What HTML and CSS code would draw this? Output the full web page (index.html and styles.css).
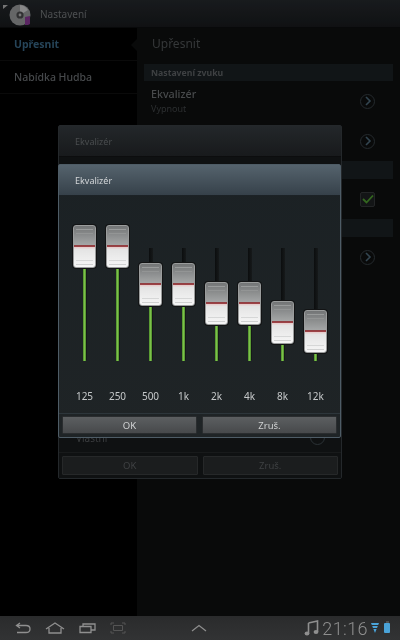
FILE: index.html
```html
<!DOCTYPE html>
<html lang="cs">
<head>
    <meta charset="UTF-8">
    <meta name="viewport" content="width=device-width, initial-scale=1.0">
    <title>Nastavení</title>
    <link rel="stylesheet" href="styles.css">
</head>
<body>
    <div class="screen">
        <!-- Action bar -->
        <header class="action-bar">
            <svg class="app-logo" width="36" height="26" viewBox="0 0 36 26">
                <path d="M3 4 L8 4 L3 8 Z" fill="#8a8a8a"/>
                <circle cx="20" cy="14" r="10.5" fill="#77787a"/>
                <path d="M20 4 A10 10 0 0 1 28 9 L20 14 Z" fill="#a0a0a2"/>
                <circle cx="20" cy="14" r="3.6" fill="#3a3a3c"/>
                <circle cx="20" cy="14" r="1.4" fill="#8d8d8f"/>
                <path d="M25 16 L30 15 L30 23 L28 24 L25 24 Z" fill="#6a2c74"/>
            </svg>
            <span class="action-title">Nastavení</span>
        </header>

        <div class="content">
            <nav class="sidebar">
                <div class="side-item active">Upřesnit</div>
                <div class="side-item">Nabídka Hudba</div>
            </nav>

            <main class="panel">
                <h2 class="panel-title">Upřesnit</h2>
                <div class="section-head">Nastavení zvuku</div>
                <div class="pref-row">
                    <div>
                        <div class="pref-name">Ekvalizér</div>
                        <div class="pref-sub">Vypnout</div>
                    </div>
                    <span class="chevron"><svg width="8" height="10" viewBox="0 0 8 10"><path d="M2 1 L6 5 L2 9" fill="none" stroke="#3d5360" stroke-width="1.6"/></svg></span>
                </div>
                <div class="pref-row end">
                    <span class="chevron"><svg width="8" height="10" viewBox="0 0 8 10"><path d="M2 1 L6 5 L2 9" fill="none" stroke="#3d5360" stroke-width="1.6"/></svg></span>
                </div>
                <div class="section-head tall"></div>
                <div class="pref-row end">
                    <span class="checkbox"><svg width="12" height="10" viewBox="0 0 12 10"><path d="M1 5 L4.5 8.5 L11 1.5" fill="none" stroke="#3d7a25" stroke-width="1.8"/></svg></span>
                </div>
                <div class="section-head tall"></div>
                <div class="pref-row end">
                    <span class="chevron"><svg width="8" height="10" viewBox="0 0 8 10"><path d="M2 1 L6 5 L2 9" fill="none" stroke="#3d5360" stroke-width="1.6"/></svg></span>
                </div>
            </main>
        </div>

        <!-- System bar -->
        <footer class="system-bar">
            <div class="nav-icons">
                <svg width="16" height="12" viewBox="0 0 16 12"><path d="M5 1 L1.5 3.5 L5 6 M2 3.5 H11 Q15 3.5 15 7 Q15 10.5 11 10.5 H2" fill="none" stroke="#8f8f8f" stroke-width="1.3"/></svg>
                <svg width="20" height="12" viewBox="0 0 20 12"><path d="M1 7 L10 1 L19 7 M4 6 V11 H16 V6" fill="none" stroke="#8f8f8f" stroke-width="1.3"/></svg>
                <svg width="17" height="12" viewBox="0 0 17 12"><path d="M1 4.5 H12 V10.5 H1 Z M4 4 V2 H16 V8 H12.5" fill="none" stroke="#8f8f8f" stroke-width="1.3"/></svg>
                <svg width="16" height="12" viewBox="0 0 16 12"><path d="M1 3 V1 H4 M12 1 H15 V3 M15 9 V11 H12 M4 11 H1 V9 M3.5 3.5 H12.5 V8.5 H3.5 Z" fill="none" stroke="#555" stroke-width="1"/></svg>
            </div>
            <svg class="up-icon" width="16" height="8" viewBox="0 0 16 8"><path d="M1 7 L8 1.5 L15 7" fill="none" stroke="#8f8f8f" stroke-width="1.2"/></svg>
            <div class="status-area">
                <svg width="15" height="16" viewBox="0 0 15 16"><path d="M4.5 3 L13.5 1 V12 M4.5 3 V13.5" fill="none" stroke="#8f8f8f" stroke-width="1.6"/><ellipse cx="3" cy="13.5" rx="2.4" ry="2" fill="#8f8f8f"/><ellipse cx="12" cy="12" rx="2.4" ry="2" fill="#8f8f8f"/></svg>
                <span class="clock">21:16</span>
                <svg class="wifi" width="8" height="10" viewBox="0 0 8 10"><path d="M0 0 H8 L7.2 2 H0.8 Z M1.2 3 H6.8 L6 5 H2 Z M2.4 6 H5.6 L4 10 Z" fill="#4aa3d8"/></svg>
                <span class="battery"></span>
            </div>
        </footer>

        <div class="scrim"></div>

        <!-- Dialog behind -->
        <section class="dialog dialog-back">
            <div class="dialog-head">Ekvalizér</div>
            <div class="dialog-body">
                <span class="back-hint">Vlastní</span>
                <span class="back-radio"></span>
            </div>
            <div class="dialog-buttons">
                <div class="btn">OK</div>
                <div class="btn">Zruš.</div>
            </div>
        </section>

        <!-- Equalizer dialog -->
        <section class="dialog dialog-front">
            <div class="dialog-head">Ekvalizér</div>
            <div class="eq" id="eq"></div>
            <div class="dialog-buttons">
                <div class="btn">OK</div>
                <div class="btn">Zruš.</div>
            </div>
        </section>
    </div>

    <script src="eq.js"></script>
</body>
</html>
```

FILE: styles.css
```css
* {
    box-sizing: border-box;
}

body {
    margin: 0;
    background: #000;
    font-family: "Noto Sans", "Open Sans", sans-serif;
}

/* the screenshot is a soft, scaled down capture */
.screen {
    position: relative;
    width: 400px;
    height: 640px;
    overflow: hidden;
    display: flex;
    flex-direction: column;
    background: #000;
    filter: blur(0.35px);
}

.action-bar {
    height: 28px;
    display: flex;
    align-items: center;
    background: linear-gradient(#1d2023, #131517);
    border-bottom: 1px solid #0a0b0c;
}

.action-title {
    margin-left: 4px;
    font-size: 10px;
    color: #5b5e60;
}

.content {
    flex: 1;
    display: flex;
    min-height: 0;
}

.sidebar {
    width: 137px;
    background: #000;
}

.side-item {
    height: 33px;
    padding: 0 14px;
    display: flex;
    align-items: center;
    font-size: 10.5px;
    font-weight: 500;
    color: #54575a;
    border-bottom: 1px solid #0c0c0c;
}

.side-item.active {
    color: #2d5169;
    font-weight: 700;
}

.panel {
    flex: 1;
    position: relative;
    padding: 0 7px;
    background: #0b0c0c;
}

.panel::before {
    content: "";
    position: absolute;
    left: -6px;
    top: 11px;
    border-top: 6px solid transparent;
    border-bottom: 6px solid transparent;
    border-right: 6px solid #0b0c0c;
}

.panel-title {
    margin: 0;
    height: 36px;
    padding: 0 8px 5px;
    display: flex;
    align-items: center;
    font-size: 12px;
    font-weight: 400;
    color: #3f4244;
}

.section-head {
    height: 17px;
    padding: 0 7px;
    display: flex;
    align-items: center;
    background: #14191c;
    font-size: 8.7px;
    font-weight: 700;
    color: #4a4d4f;
}

.section-head.tall {
    height: 18px;
}

.pref-row {
    height: 40px;
    padding: 0 18px 0 7px;
    display: flex;
    align-items: center;
    justify-content: space-between;
}

.pref-row.end {
    justify-content: flex-end;
}

.pref-name {
    font-size: 10.7px;
    font-weight: 500;
    line-height: 15px;
    color: #55585a;
}

.pref-sub {
    font-size: 9px;
    line-height: 13px;
    color: #343739;
}

.chevron {
    width: 15px;
    height: 15px;
    display: flex;
    align-items: center;
    justify-content: center;
    border: 1px solid #2b3236;
    border-radius: 50%;
}

.checkbox {
    width: 15px;
    height: 15px;
    display: flex;
    align-items: center;
    justify-content: center;
    background: #17191a;
    border: 1px solid #2a2c2d;
    border-radius: 2px;
}

.system-bar {
    height: 24px;
    display: flex;
    align-items: center;
    background: linear-gradient(#2a2b2c, #323334);
}

.nav-icons {
    display: flex;
    align-items: center;
    gap: 14px;
    margin-left: 15px;
}

.up-icon {
    margin-left: 65px;
}

.status-area {
    margin-left: auto;
    margin-right: 10px;
    display: flex;
    align-items: center;
    gap: 3px;
}

.clock {
    font-family: "Roboto", sans-serif;
    font-size: 18px;
    font-weight: 300;
    letter-spacing: 0.4px;
    color: #8f8f8f;
}

.battery {
    position: relative;
    width: 6px;
    height: 10px;
    margin-left: 2px;
    background: #4aa3d8;
    border-radius: 1px;
}

.battery::before {
    content: "";
    position: absolute;
    left: 1.5px;
    top: -2px;
    width: 3px;
    height: 2px;
    background: #4f5152;
}

.scrim {
    position: absolute;
    inset: 0 0 24px 0;
    background: rgba(0, 0, 0, 0.15);
}

.dialog {
    position: absolute;
    display: flex;
    flex-direction: column;
    border-radius: 2px;
}

.dialog-back {
    left: 58px;
    top: 125px;
    width: 284px;
    height: 354px;
    background: #0f1112;
    border: 1px solid #24282b;
}

.dialog-back .dialog-head {
    background: linear-gradient(#23272a, #181a1c);
    color: #4a4d4f;
    border-bottom: 1px solid #0c0d0e;
}

.dialog-body {
    flex: 1;
    position: relative;
}

.back-hint {
    position: absolute;
    left: 17px;
    bottom: 7px;
    font-size: 10px;
    color: #3a3c3e;
}

.back-radio {
    position: absolute;
    right: 16px;
    bottom: 7px;
    width: 15px;
    height: 15px;
    border: 1px solid #2b3236;
    border-radius: 50%;
}

.dialog-back .btn {
    background: #1b1d1e;
    border-color: #262829;
    color: #3f4143;
}

.dialog-back .dialog-buttons {
    height: 26px;
    padding: 3px;
    background: #0f1112;
    border-top: 1px solid #181a1b;
}

.dialog-front {
    left: 58px;
    top: 164px;
    width: 283px;
    height: 274px;
    background: linear-gradient(#1b2124, #1f2426);
    border: 1px solid #4e5c66;
}

.dialog-head {
    height: 31px;
    flex-shrink: 0;
    padding: 0 16px;
    display: flex;
    align-items: center;
    font-size: 9px;
    color: #d3d6d8;
    background: linear-gradient(#55636d, #36414a);
    border-bottom: 1px solid #1c2226;
}

.eq {
    flex: 1;
    position: relative;
    display: flex;
    padding: 0 8px 0 9px;
}

.band {
    flex: 1;
    position: relative;
    text-align: center;
}

.track {
    position: absolute;
    left: 50%;
    top: 52px;
    width: 4px;
    height: 112px;
    margin-left: -2px;
    background: linear-gradient(90deg, #0b0d0e, #16191a);
}

.level {
    position: absolute;
    left: 50%;
    width: 3px;
    margin-left: -1.5px;
    background: linear-gradient(90deg, #4a8a28, #7cc04a, #4a8a28);
}

.thumb {
    position: absolute;
    left: 50%;
    width: 23px;
    height: 43px;
    margin-left: -11.5px;
    border-radius: 3px;
    border: 1px solid #9a9c9c;
    box-shadow: 0 0 0 1px #131415;
    background: linear-gradient(#737576 0%, #a4a6a6 46%, #8c3c3f 46%, #a04448 51%, #e6c6c6 51%, #e4e4e4 57%, #f6f6f6 100%);
}

.thumb::before,
.thumb::after {
    content: "";
    position: absolute;
    left: 2px;
    right: 2px;
    height: 3px;
}

.thumb::before {
    top: 3px;
    border-top: 1px solid #999b9b;
    border-bottom: 1px solid #939595;
}

.thumb::after {
    bottom: 2px;
    border-top: 1px solid #d6d7d7;
    border-bottom: 1px solid #d0d1d1;
}

.band-label {
    position: absolute;
    left: 0;
    right: 0;
    top: 193px;
    font-size: 10px;
    color: #c6c9ca;
}

.dialog-buttons {
    height: 24px;
    flex-shrink: 0;
    padding: 2px 3px 3px;
    display: flex;
    gap: 5px;
    border-top: 1px solid #2d363b;
}

.btn {
    flex: 1;
    display: flex;
    align-items: center;
    justify-content: center;
    font-size: 9.5px;
    color: #d0d2d3;
    background: linear-gradient(#5c5f61, #47494b);
    border: 1px solid #2a2d2f;
    border-radius: 1px;
}
```

FILE: eq.js
```js
// thumb top for each band, measured from the top of the eq area
const bands = [
    { name: '125', top: 29 },
    { name: '250', top: 29 },
    { name: '500', top: 67 },
    { name: '1k', top: 67 },
    { name: '2k', top: 86 },
    { name: '4k', top: 86 },
    { name: '8k', top: 105 },
    { name: '12k', top: 114 }
];

const eq = document.getElementById('eq');

bands.forEach(band => {
    const col = document.createElement('div');
    col.className = 'band';

    const track = document.createElement('div');
    track.className = 'track';

    const level = document.createElement('div');
    level.className = 'level';
    level.style.top = `${band.top + 43}px`;
    level.style.height = `${165 - band.top - 43}px`;

    const thumb = document.createElement('div');
    thumb.className = 'thumb';
    thumb.style.top = `${band.top}px`;

    const label = document.createElement('div');
    label.className = 'band-label';
    label.textContent = band.name;

    col.append(track, level, thumb, label);
    eq.appendChild(col);
});
```
